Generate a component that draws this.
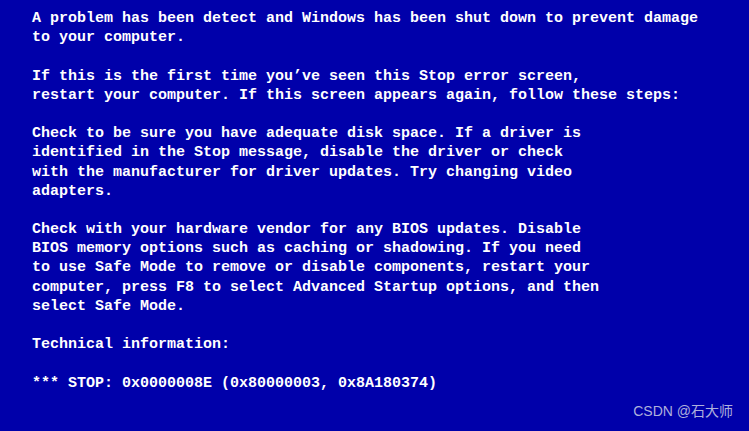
import React from 'react';

const lines = [
  'A problem has been detect and Windows has been shut down to prevent damage',
  'to your computer.',
  '',
  'If this is the first time you\u2019ve seen this Stop error screen,',
  'restart your computer. If this screen appears again, follow these steps:',
  '',
  'Check to be sure you have adequate disk space. If a driver is',
  'identified in the Stop message, disable the driver or check',
  'with the manufacturer for driver updates. Try changing video',
  'adapters.',
  '',
  'Check with your hardware vendor for any BIOS updates. Disable',
  'BIOS memory options such as caching or shadowing. If you need',
  'to use Safe Mode to remove or disable components, restart your',
  'computer, press F8 to select Advanced Startup options, and then',
  'select Safe Mode.',
  '',
  'Technical information:',
  '',
  '*** STOP: 0x0000008E (0x80000003, 0x8A180374)',
];

const App: React.FC = () => {
  return (
    <div className="relative w-[749px] h-[431px] overflow-hidden bg-[#0000aa]">
      {/* Stop screen text */}
      <div
        className="pt-[9px] pl-[32px] text-white font-bold text-[15px] leading-[19.2px] whitespace-pre"
        style={{ fontFamily: '"Liberation Mono", "DejaVu Sans Mono", monospace' }}
      >
        {lines.map((line, i) => (
          <div key={i} className="h-[19.2px]">{line}</div>
        ))}
      </div>

      {/* watermark */}
      <div
        className="absolute right-[16px] bottom-[9px] text-[14px] text-[#aeb0dc]"
        style={{ fontFamily: '"Liberation Sans", "Noto Sans CJK SC", sans-serif' }}
      >
        CSDN @石大师
      </div>
    </div>
  );
};

export default App;
